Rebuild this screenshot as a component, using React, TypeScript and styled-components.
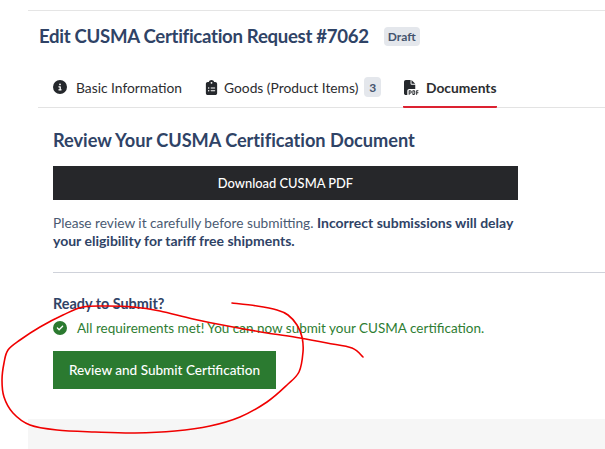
import React from "react";
import styled, { createGlobalStyle } from "styled-components";
import { FaCircleInfo, FaClipboardList, FaFilePdf, FaCircleCheck } from "react-icons/fa6";

const Global = createGlobalStyle`
  html, body { margin: 0; padding: 0; background: #fff; overflow: hidden; }
  body { font-family: "Lato", "Noto Sans", sans-serif; }
`;

const Page = styled.div`
  position: relative;
  width: 605px;
  height: 449px;
  padding: 10px 0 0 28px;
  box-sizing: border-box;
  overflow: hidden;
`;

const Card = styled.div`
  border-top: 1px solid #e5e5e5;
  display: flex;
  flex-direction: column;
  height: 439px;
`;

const Header = styled.div`
  display: flex;
  align-items: center;
  gap: 15px;
  padding: 7px 0 0 11px;
  height: 36px;
`;

const Title = styled.h1`
  margin: 0;
  font-size: 18.6px;
  font-weight: 700;
  letter-spacing: -0.3px;
  color: #2f4366;
  white-space: nowrap;
`;

const Badge = styled.span`
  display: inline-flex;
  align-items: center;
  justify-content: center;
  background: #e4e7ec;
  color: #45546e;
  border-radius: 4px;
  font-size: 12px;
  font-weight: 700;
  width: 36px;
  height: 19px;
`;

const Tabs = styled.div`
  display: flex;
  margin: 14px 0 0 10px;
  height: 39px;
  border-bottom: 1px solid #e3e3e3;
`;

const Tab = styled.div<{ $active?: boolean; $gap: number; $left: number; $width: number; $inset: number }>`
  display: flex;
  align-items: center;
  gap: ${(p) => p.$gap}px;
  flex: none;
  width: ${(p) => p.$width}px;
  height: 40px;
  margin-left: ${(p) => p.$left}px;
  padding-left: ${(p) => p.$inset}px;
  box-sizing: border-box;
  color: #2c2d30;
  font-size: 13.8px;
  font-weight: ${(p) => (p.$active ? 700 : 400)};
  border-bottom: 2px solid ${(p) => (p.$active ? "#dc2231" : "transparent")};
  border-radius: 1px;
  white-space: nowrap;
  svg { color: #25282c; flex: none; }
`;

const Count = styled.span`
  display: inline-flex;
  align-items: center;
  justify-content: center;
  width: 17px;
  height: 20px;
  background: #e4e7ec;
  color: #45546e;
  border-radius: 4px;
  font-size: 12px;
  font-weight: 700;
  margin-left: 1px;
`;

const Body = styled.div`
  padding: 0 0 0 25px;
  display: flex;
  flex-direction: column;
  flex: 1;
`;

const Heading = styled.h2`
  margin: 20px 0 0;
  font-size: 18.2px;
  line-height: 24px;
  font-weight: 700;
  letter-spacing: -0.03px;
  color: #2f4366;
  white-space: nowrap;
`;

const DownloadButton = styled.button`
  display: block;
  width: 465px;
  height: 34px;
  margin-top: 14px;
  padding: 0;
  border: 0;
  background: #26272a;
  color: #fff;
  font: 500 12.9px "Lato", sans-serif;
`;

const Note = styled.p`
  margin: 14px 0 0;
  width: 470px;
  font-size: 13.7px;
  line-height: 18px;
  color: #4a5a72;
  strong { color: #2f4366; font-weight: 700; font-size: 14px; }
`;

const Rule = styled.hr`
  border: 0;
  height: 1px;
  background: #cfd2da;
  margin: 22px 0 0;
`;

const Ready = styled.h3`
  margin: 22px 0 0;
  font-size: 14.4px;
  line-height: 18px;
  font-weight: 700;
  color: #2f4366;
`;

const Status = styled.div`
  display: flex;
  align-items: center;
  gap: 10px;
  margin-top: 6px;
  height: 18px;
  font-size: 13.5px;
  color: #2e7d32;
  white-space: nowrap;
`;

const SubmitButton = styled.button`
  width: 223px;
  height: 38px;
  margin-top: 14px;
  padding: 0;
  border: 0;
  background: #2b7a30;
  color: #fff;
  font: 500 13.55px "Lato", sans-serif;
`;

const Footer = styled.div`
  margin-top: auto;
  height: 31px;
  background: #f6f6f6;
`;

const Scribble = styled.svg`
  position: absolute;
  left: 0;
  top: 0;
  pointer-events: none;
`;

const strokePoints: [number, number][] = [
  [232, 303], [257, 306], [277, 310], [288, 315], [297, 325], [302, 337], [303, 352], [299, 372],
  [287, 385], [267, 402], [240, 417], [210, 426], [175, 431], [135, 433], [95, 432], [57, 430],
  [30, 425], [13, 413], [4, 397], [2, 380], [4, 363], [8, 350], [20, 340], [40, 327], [63, 315],
  [83, 307], [107, 306], [133, 307], [160, 311], [193, 319], [233, 327], [267, 333], [300, 338],
  [327, 343], [352, 348], [363, 357],
];

function smoothPath(pts: [number, number][]) {
  let d = `M${pts[0][0]} ${pts[0][1]}`;
  for (let i = 0; i < pts.length - 1; i++) {
    const p0 = pts[Math.max(i - 1, 0)];
    const p1 = pts[i];
    const p2 = pts[i + 1];
    const p3 = pts[Math.min(i + 2, pts.length - 1)];
    const c1x = p1[0] + (p2[0] - p0[0]) / 6;
    const c1y = p1[1] + (p2[1] - p0[1]) / 6;
    const c2x = p2[0] - (p3[0] - p1[0]) / 6;
    const c2y = p2[1] - (p3[1] - p1[1]) / 6;
    d += ` C${c1x.toFixed(1)} ${c1y.toFixed(1)} ${c2x.toFixed(1)} ${c2y.toFixed(1)} ${p2[0]} ${p2[1]}`;
  }
  return d;
}

export default function App() {
  return (
    <>
      <Global />
      <Page>
        <Card>
          <Header>
            <Title>Edit CUSMA Certification Request #7062</Title>
            <Badge>Draft</Badge>
          </Header>
          <Tabs>
            <Tab $gap={9} $left={0} $inset={15} $width={153}>
              <FaCircleInfo size={14} />
              Basic Information
            </Tab>
            <Tab $gap={5} $left={0} $inset={13} $width={190}>
              <FaClipboardList size={15} />
              Goods (Product Items)
              <Count>3</Count>
            </Tab>
            <Tab $active $gap={7} $left={22} $inset={1} $width={94}>
              <FaFilePdf size={15} />
              Documents
            </Tab>
          </Tabs>
          <Body>
            <Heading>Review Your CUSMA Certification Document</Heading>
            <DownloadButton>Download CUSMA PDF</DownloadButton>
            <Note>
              Please review it carefully before submitting. <strong>Incorrect submissions will delay your eligibility for tariff free shipments.</strong>
            </Note>
            <Rule />
            <Ready>Ready to Submit?</Ready>
            <Status>
              <FaCircleCheck size={14} color="#2b7a30" />
              All requirements met! You can now submit your CUSMA certification.
            </Status>
            <SubmitButton>Review and Submit Certification</SubmitButton>
          </Body>
          <Footer />
        </Card>
        <Scribble width="605" height="449" viewBox="0 0 605 449" fill="none">
          <path d={smoothPath(strokePoints)} stroke="#f00000" strokeWidth="1.6" strokeLinecap="round" strokeLinejoin="round" />
        </Scribble>
      </Page>
    </>
  );
}
